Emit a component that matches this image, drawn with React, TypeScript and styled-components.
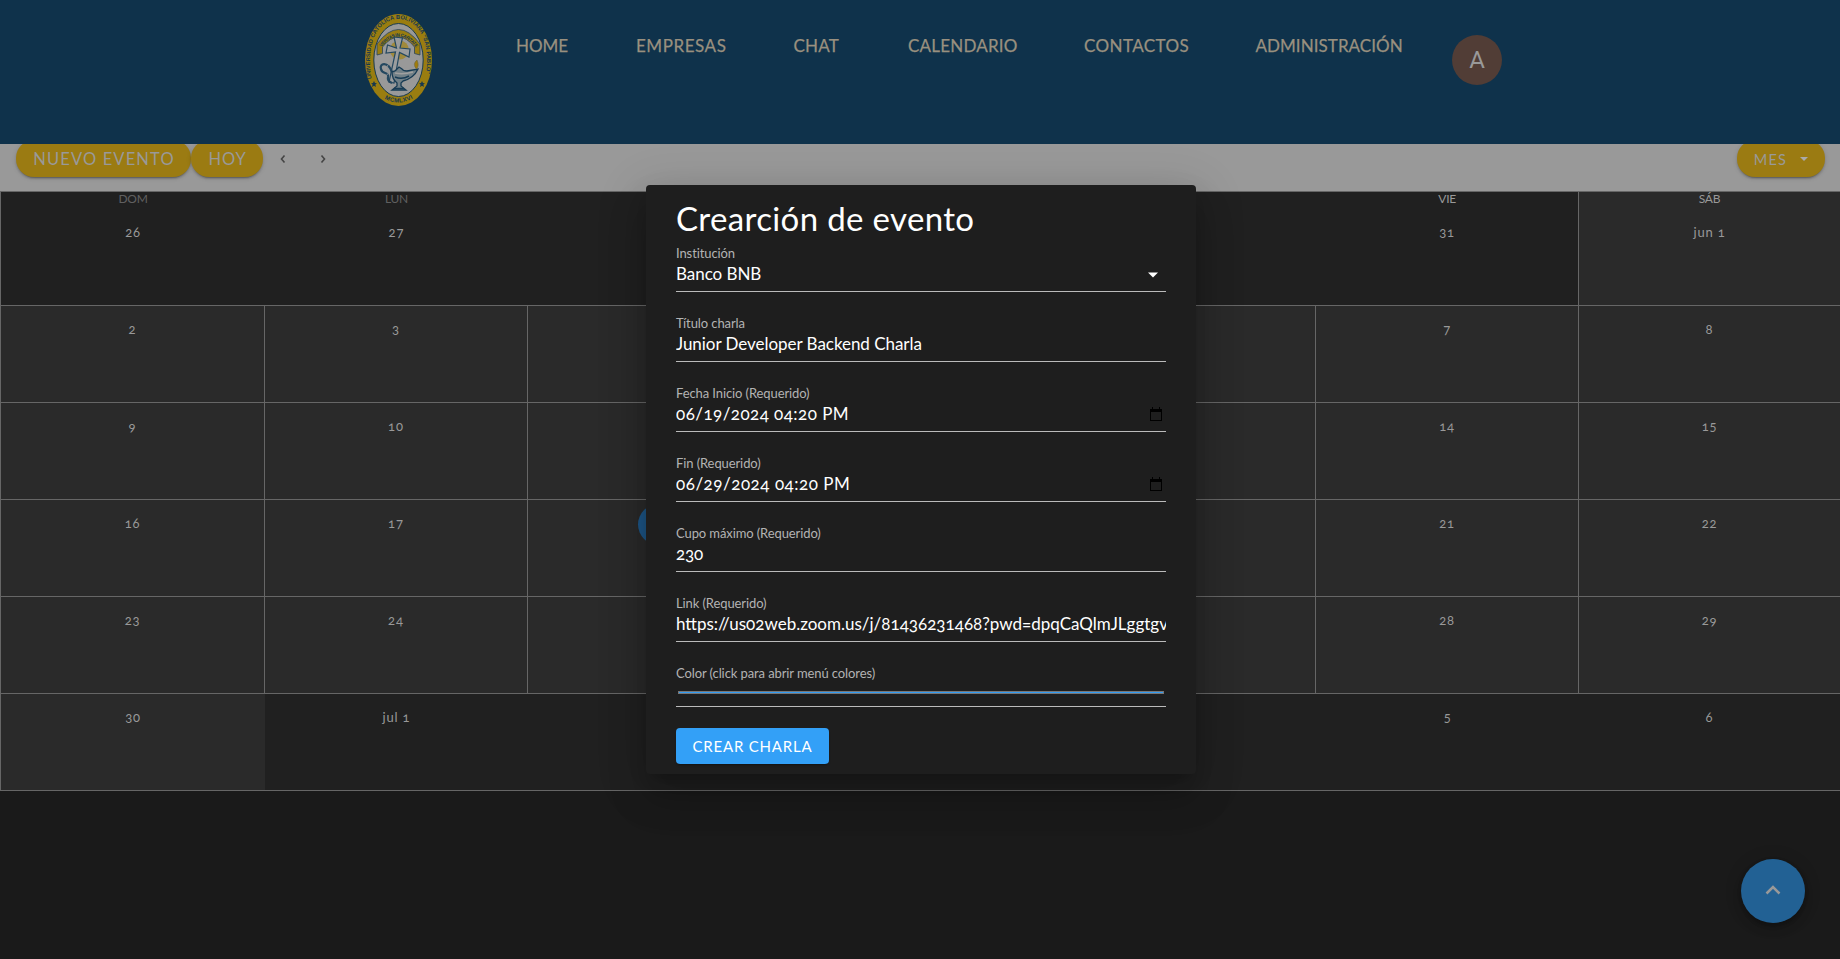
import React from 'react';
import styled, { createGlobalStyle } from 'styled-components';

const Global = createGlobalStyle`
  *{box-sizing:border-box}
  body{margin:0;background:#1a1a1a;font-family:Lato,"Open Sans",sans-serif;overflow:hidden;font-variant-numeric:oldstyle-nums}
`;
const Page = styled.div`height:959px;position:relative;display:flex;flex-direction:column;`;
const Header = styled.header`height:144px;flex:none;background:#0f324b;display:flex;align-items:flex-start;padding-left:364px;z-index:1;`;
const Logo = styled.svg`width:69px;height:94px;margin-top:13px;flex:none;`;
const Nav = styled.nav`display:flex;margin-left:83px;margin-top:34px;`;
const NavLink = styled.a<{ $w: number; $ls: number }>`width:${p => p.$w}px;flex:none;font-size:17px;line-height:24px;white-space:nowrap;color:#99907f;-webkit-text-stroke:.25px #99907f;letter-spacing:${p => p.$ls}px;`;
const Avatar = styled.div`width:50px;height:50px;border-radius:50%;background:#513d36;color:#999;font:24px/50px Roboto,sans-serif;text-align:center;margin-top:35px;flex:none;`;
const Toolbar = styled.div`height:47px;flex:none;background:#999;display:flex;align-items:flex-start;padding:0 15px 0 16px;`;
const Pill = styled.button<{ $w: number; $fs: number; $ls: number }>`
  width:${p => p.$w}px;height:37px;margin-top:-4px;border:0;padding:1px 0 0 1px;border-radius:18px;background:#9b7b12;color:#999;
  font:${p => p.$fs}px Lato,sans-serif;letter-spacing:${p => p.$ls}px;display:flex;align-items:center;justify-content:center;gap:12px;
  box-shadow:0 3px 1px -2px #0003,0 2px 2px #0002,0 1px 5px #0002;
`;
const Arrow = styled.svg`width:24px;height:24px;margin:3px 0 0 8px;& + &{margin-left:16px}`;
const Spacer = styled.div`flex:1;`;
const Calendar = styled.main`height:600px;flex:none;border-top:1px solid #666;border-left:1px solid #666;display:grid;grid-template-columns:264px repeat(5,262.8px) 1fr;grid-template-rows:114px repeat(5,97px);`;
const Day = styled.div<{ $out: boolean; $line: boolean; $head: boolean }>`
  background:${p => p.$out ? '#202020' : '#2a2a2a'};border-bottom:1px solid #666;
  border-right:${p => p.$line ? '1px solid #666' : '0'};
  display:flex;flex-direction:column;align-items:center;padding-top:${p => p.$head ? 1 : 14}px;
`;
const Weekday = styled.div<{ $out: boolean }>`font-size:12px;line-height:12px;color:${p => p.$out ? '#606060' : '#999'};letter-spacing:-.3px;margin-bottom:18px;`;
const Num = styled.div`font-size:13px;line-height:18px;color:#999;letter-spacing:.8px;white-space:nowrap;`;
const Today = styled(Num)`width:41px;height:41px;margin-top:-10px;border-radius:50%;background:#1d5687;line-height:40px;text-align:center;`;
const Dialog = styled.section`
  position:absolute;left:646px;top:185px;width:550px;height:589px;background:#1e1e1e;border-radius:4px;padding:16px 30px 0;z-index:2;
  box-shadow:0 11px 15px -7px #0003,0 24px 38px 3px #00000024,0 9px 46px 8px #0000001f;
`;
const Title = styled.h1`margin:0 0 6px;font-size:33px;line-height:34px;height:36px;font-weight:400;color:#fff;letter-spacing:.35px;white-space:nowrap;`;
const Field = styled.div<{ $h: number }>`height:${p => p.$h}px;`;
const Box = styled.div<{ $h: number }>`height:${p => p.$h}px;border-bottom:1px solid #bbb;`;
const Label = styled.div`font-size:13px;line-height:20px;color:#b3b3b3;letter-spacing:-.1px;white-space:nowrap;`;
const Value = styled.div<{ $ls: number }>`display:flex;align-items:center;justify-content:space-between;line-height:20px;height:22px;font-size:17px;color:#fff;letter-spacing:${p => p.$ls}px;white-space:nowrap;overflow:hidden;`;
const Icon = styled.svg<{ $r: number }>`width:16px;height:16px;margin-right:${p => p.$r}px;flex:none;`;
const Swatch = styled.div`height:3px;margin:8px 2px 0;background:#339bf2;border:1px solid #777;`;
const Submit = styled.button`display:block;width:153px;height:36px;padding:0 0 1px;border:0;border-radius:4px;background:#33a0f7;color:#fff;font:15px Lato,sans-serif;letter-spacing:.8px;box-shadow:0 3px 1px -2px #0003,0 2px 2px #0002;`;
const Fab = styled.button`position:absolute;right:35px;top:859px;width:64px;height:64px;border:0;border-radius:50%;background:#226194;display:flex;align-items:center;justify-content:center;padding:0;box-shadow:0 3px 5px -1px #0003,0 6px 10px #0002,0 1px 18px #0002;`;

const nav: [string, number, number][] = [['HOME', 120, 0], ['EMPRESAS', 157.5, .55], ['CHAT', 114.5, .2], ['CALENDARIO', 176, .2], ['CONTACTOS', 171.5, .4], ['ADMINISTRACIÓN', 196.5, .05]];
const days = ['26','27','28','29','30','31','jun 1','2','3','4','5','6','7','8','9','10','11','12','13','14','15','16','17','18','19','20','21','22','23','24','25','26','27','28','29','30','jul 1','2','3','4','5','6'];
const names = ['DOM','LUN','MAR','MIÉ','JUE','VIE','SÁB'];
const fields: { label: string; value: string; ls: number; icon?: 'drop' | 'date' }[] = [
  { label: 'Institución', value: 'Banco BNB', ls: -.05, icon: 'drop' },
  { label: 'Título charla', value: 'Junior Developer Backend Charla', ls: -.04 },
  { label: 'Fecha Inicio (Requerido)', value: '06/19/2024 04:20 PM', ls: .45, icon: 'date' },
  { label: 'Fin (Requerido)', value: '06/29/2024 04:20 PM', ls: .52, icon: 'date' },
  { label: 'Cupo máximo (Requerido)', value: '230', ls: -.2 },
  { label: 'Link (Requerido)', value: 'https://us02web.zoom.us/j/81436231468?pwd=dpqCaQlmJLggtgvb', ls: 0 },
];

const Crest = () => (
  <Logo viewBox="0 0 69 94">
    <defs>
      <path id="ring" d="M7.5 66C1 25 17 6 34.5 6S68 25 61.5 66" />
      <path id="base" d="M14 81Q34.5 98 55 81" />
      <path id="banner" d="M17.5 34Q34.5 13 51.5 34" />
    </defs>
    <ellipse cx="34.5" cy="47" rx="33.5" ry="46" fill="#9a7d10" />
    <ellipse cx="34.5" cy="47" rx="24.7" ry="36.5" fill="#999" stroke="#193b50" />
    <g fill="#17384e" fontFamily="Liberation Sans" fontWeight="700">
      <text fontSize="5.7"><textPath href="#ring" textLength="144">UNIVERSIDAD CATÓLICA BOLIVIANA "SAN PABLO"</textPath></text>
      <text fontSize="6"><textPath href="#base" startOffset="8" textLength="30">MCMLXVI</textPath></text>
    </g>
    <circle cx="35.5" cy="37" r="9.5" fill="#a08a3c" />
    <path d="M13 31Q34.5 2 56 31V42L50.5 40.5V34Q34.5 14 18.5 34V40.5L13 42Z" fill="#9a7d10" stroke="#29445a" strokeWidth=".8" />
    <text fontSize="4.6" fontFamily="Liberation Sans" fontWeight="700" fill="#17384e"><textPath href="#banner" textLength="42">VERITAS IN CARITATE</textPath></text>
    <path d="M30 24L38.5 25L36 35L46 36L45 44L35.5 39.5L30 70L25 69L31.5 39L22 40L23.5 32L32.5 35Z" fill="#9b9d9e" stroke="#244860" strokeWidth="1.2" />
    <path d="M28 59C24 48 15 50 17 56C18 62 25 58 24 64Q23 68 28 70" fill="none" stroke="#244860" strokeWidth="2.2" />
    <path d="M25.5 51C20 53 27 58 23 62" fill="none" stroke="#8b9297" strokeWidth=".8" />
    <path d="M28 59Q32 58 33 56L35 54L38 56Q39 58 43 58L54 56Q50 65 39 68L37 70V73L42 77H28L33 73V70Q28 66 28 59Z" fill="#718087" stroke="#173b54" strokeWidth="1.3" />
    <path d="M31 60Q39 62 49 59" fill="none" stroke="#a0a0a0" strokeWidth="1.4" />
    <path d="M31 64Q38 67 45 63M30 75.5H40" fill="none" stroke="#173b54" strokeWidth="1.5" />
    <path d="M52.5 56Q48 51 53 47Q55.5 53 52.5 56Z" fill="#a07c0c" stroke="#6b6640" strokeWidth=".6" />
    <path d="M10 68l1 2 2 .2-1.6 1.4.5 2.4-1.9-1.3-2 1.3.6-2.4L7 70.2l2-.2ZM58 68l1 2 2 .2-1.6 1.4.5 2.4-1.9-1.3-2 1.3.6-2.4-1.6-1.4 2-.2Z" fill="#17384e" />
  </Logo>
);
const FieldIcon = ({ kind }: { kind: 'drop' | 'date' }) => (
  <Icon viewBox="0 0 16 16" $r={kind === 'date' ? 2 : 5}>
    {kind === 'drop' ? <path d="M3 6.5H13L8 11.5Z" fill="#fff" /> : <path d="M4 1V3H2V15H14V3H12V1H11V3H5V1ZM3 6H13V14H3Z" fill="#000" fillRule="evenodd" />}
  </Icon>
);

export default function App() {
  return (
    <Page>
      <Global />
      <Header>
        <Crest />
        <Nav>{nav.map(([t, w, ls]) => <NavLink key={t} $w={w} $ls={ls}>{t}</NavLink>)}</Nav>
        <Avatar>A</Avatar>
      </Header>
      <Toolbar>
        <Pill $w={175} $fs={16.5} $ls={1.15}>NUEVO EVENTO</Pill>
        <Pill $w={72} $fs={16.5} $ls={.9}>HOY</Pill>
        <Arrow viewBox="0 0 24 24"><path d="M13.5 8.5L10.5 12L13.5 15.5" fill="none" stroke="#444" strokeWidth="1.6" /></Arrow>
        <Arrow viewBox="0 0 24 24"><path d="M10.5 8.5L13.5 12L10.5 15.5" fill="none" stroke="#444" strokeWidth="1.6" /></Arrow>
        <Spacer />
        <Pill $w={88} $fs={14.5} $ls={1.2}>MES <svg width="10" height="5" viewBox="0 0 10 5"><path d="M1 0H9L5 4Z" fill="#aaa" /></svg></Pill>
      </Toolbar>
      <Calendar>
        {days.map((d, i) => {
          const out = i < 6 || i > 35;
          return (
            <Day key={i} $out={out} $head={i < 7} $line={i > 6 ? i < 35 && i % 7 < 6 : i === 5}>
              {i < 7 && <Weekday $out={i < 2}>{names[i]}</Weekday>}
              {i === 23 ? <Today>{d}</Today> : <Num>{d}</Num>}
            </Day>
          );
        })}
      </Calendar>
      <Dialog>
        <Title>Crearción de evento</Title>
        {fields.map(f => (
          <Field key={f.label} $h={70}>
            <Box $h={49}>
              <Label>{f.label}</Label>
              <Value $ls={f.ls}><span>{f.value}</span>{f.icon && <FieldIcon kind={f.icon} />}</Value>
            </Box>
          </Field>
        ))}
        <Field $h={65}>
          <Box $h={44}><Label>Color (click para abrir menú colores)</Label><Swatch /></Box>
        </Field>
        <Submit>CREAR CHARLA</Submit>
      </Dialog>
      <Fab><svg width="24" height="24" viewBox="0 0 24 24"><path d="M5.5 14.5L12 8L18.5 14.5" fill="none" stroke="#999" strokeWidth="2.5" /></svg></Fab>
    </Page>
  );
}
